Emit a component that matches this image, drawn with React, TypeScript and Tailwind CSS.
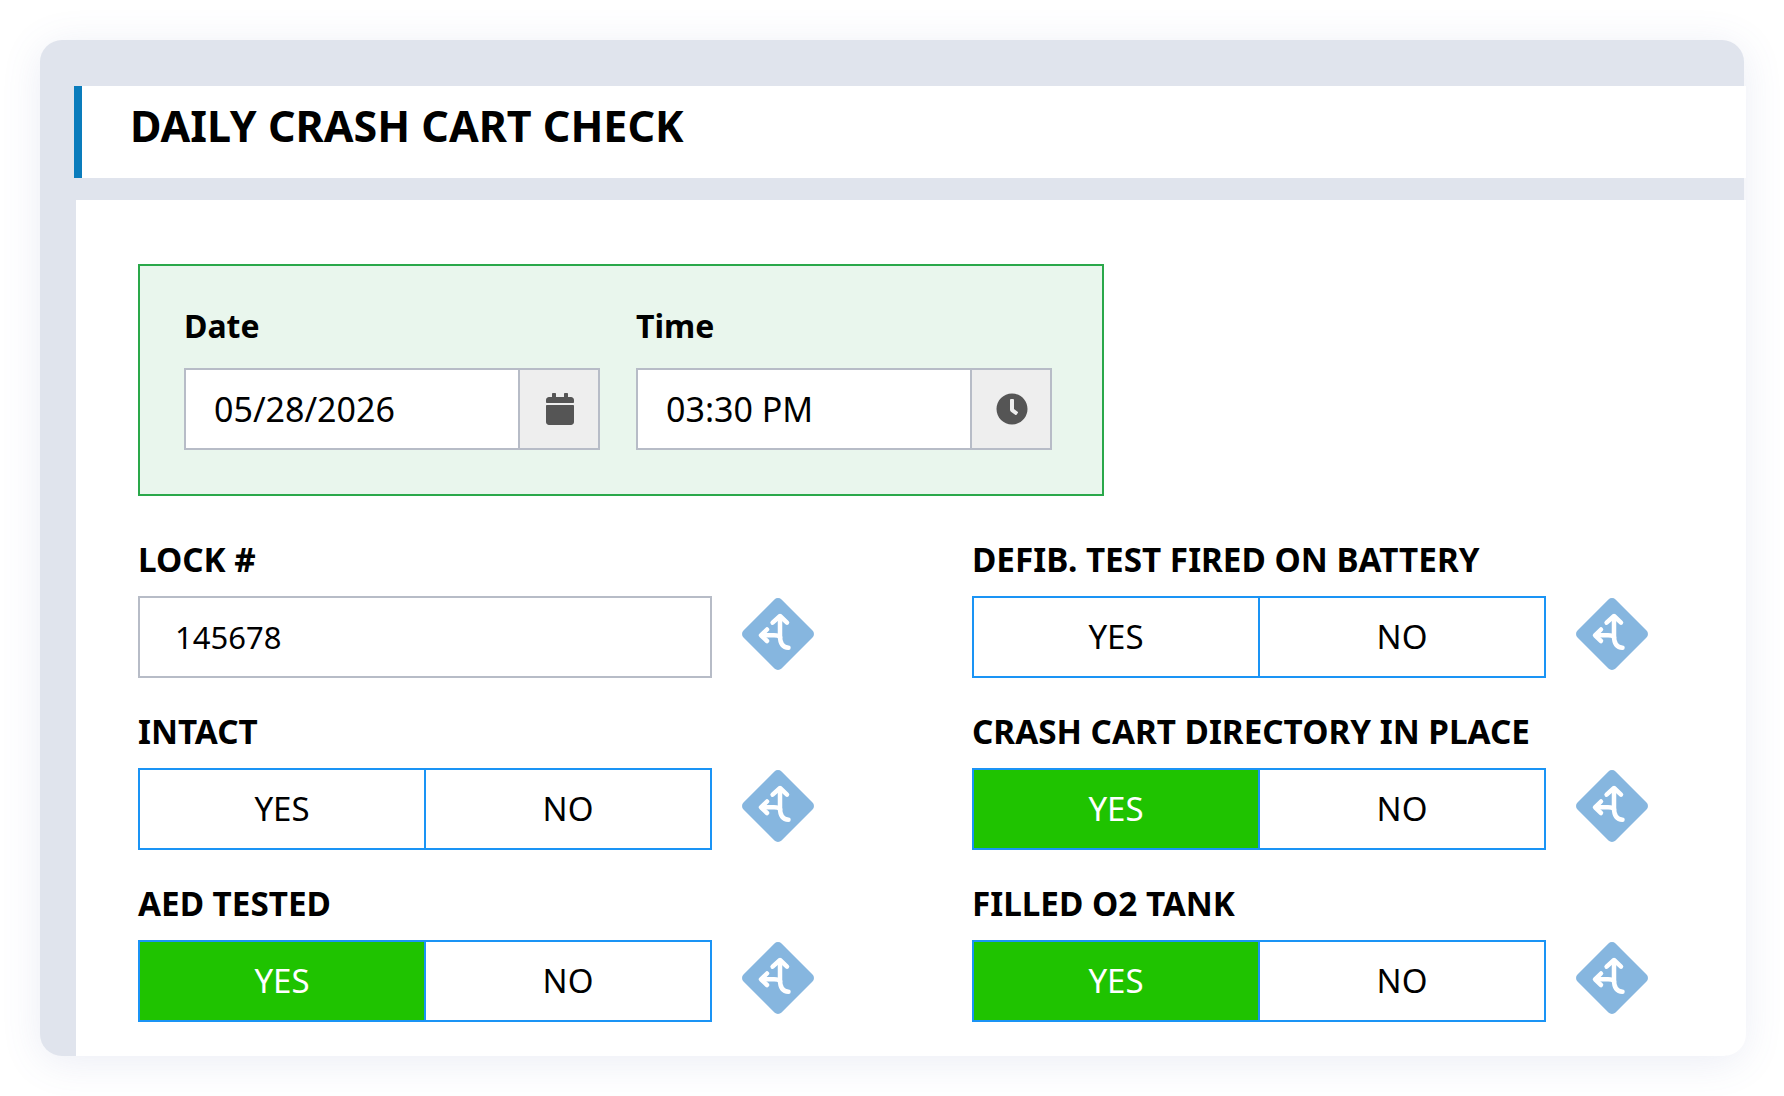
import { FaCalendar, FaClock } from "react-icons/fa";

// diamond "decision" badge next to each field
const BranchIcon = () => (
  <svg width="72" height="72" viewBox="0 0 72 72" className="mt-[2px] shrink-0">
    <rect x="9.1" y="9.1" width="53.8" height="53.8" rx="5" fill="#86b6df" transform="rotate(45 36 36)" />
    <g fill="none" stroke="#fff" strokeWidth="4.5" strokeLinecap="round" strokeLinejoin="round">
      <path d="M38 19 V38 C38 45 40 49.5 46.5 49.7" />
      <path d="M30.6 24.7 L38 18 L45 24.7" />
      <path d="M20 37.3 H32 C35 37.3 37 37.5 38 39" />
      <path d="M25 31.5 L19 37.3 L25 43" />
    </g>
  </svg>
);

const PickerInput = ({ value, children }: { value: string; children: React.ReactNode }) => (
  <div className="flex h-[82px] w-[416px] border-2 border-[#b7bcc7] bg-white">
    <div className="flex flex-1 items-center pl-[28px] text-[34px] text-black">{value}</div>
    <div className="flex w-[80px] items-center justify-center border-l-2 border-[#b7bcc7] bg-[#eeeeee] pl-[2px] text-[#555555]">
      {children}
    </div>
  </div>
);

const YesNo = ({ yes }: { yes?: boolean }) => (
  <div className="flex h-[82px] flex-1 border-2 border-[#1a94f5] text-[33px]">
    <div className={`flex w-[286px] items-center justify-center border-r-2 border-[#1a94f5] ${yes ? "bg-[#1fc300] text-white" : "bg-white text-black"}`}>
      YES
    </div>
    <div className="flex flex-1 items-center justify-center bg-white text-black">NO</div>
  </div>
);

const Field = ({ label, children }: { label: string; children: React.ReactNode }) => (
  <div>
    <div className="mb-[16px] h-[41px] text-[33.25px] leading-[41px] font-bold whitespace-nowrap text-black">{label}</div>
    <div className="flex items-start gap-[30px]">
      <div className="flex w-[574px]">{children}</div>
      <BranchIcon />
    </div>
  </div>
);

const App = () => {
  return (
    <div className="min-h-screen bg-white p-10 font-['Noto_Sans',sans-serif]">
      <div className="h-[1016px] rounded-[22px] bg-[#e0e4ed] pt-[46px] shadow-[0_6px_40px_rgba(90,110,170,0.12)]">
        {/* Title bar */}
        <div className="-mr-[2px] ml-[34px] flex h-[92px] items-center border-l-[8px] border-[#0a7cbc] bg-white pb-[12px] pl-[48px]">
          <h1 className="text-[43px] font-bold text-black">DAILY CRASH CART CHECK</h1>
        </div>

        <main className="mt-[22px] -mr-[2px] ml-[36px] h-[856px] rounded-br-[22px] bg-white pt-[64px] pl-[62px]">
          <div className="flex h-[232px] w-[966px] gap-[36px] border-2 border-[#2aa84a] bg-[#e9f6ed] pt-[37px] pl-[44px]">
            <div>
              <div className="mb-[19px] h-[46px] text-[32px] leading-[46px] font-bold text-black">Date</div>
              <PickerInput value="05/28/2026">
                <FaCalendar size={32} />
              </PickerInput>
            </div>
            <div>
              <div className="mb-[19px] h-[46px] text-[32px] leading-[46px] font-bold text-black">Time</div>
              <PickerInput value="03:30 PM">
                <FaClock size={32} />
              </PickerInput>
            </div>
          </div>

          <div className="mt-[43px] grid grid-cols-[834px_1fr] gap-y-[33px]">
            <Field label="LOCK #">
              <div className="flex h-[82px] flex-1 items-center border-2 border-[#b7bcc7] pl-[35px] text-[31px] text-black">145678</div>
            </Field>
            <Field label="DEFIB. TEST FIRED ON BATTERY">
              <YesNo />
            </Field>
            <Field label="INTACT">
              <YesNo />
            </Field>
            <Field label="CRASH CART DIRECTORY IN PLACE">
              <YesNo yes />
            </Field>
            <Field label="AED TESTED">
              <YesNo yes />
            </Field>
            <Field label="FILLED O2 TANK">
              <YesNo yes />
            </Field>
          </div>
        </main>
      </div>
    </div>
  );
};

export default App;
